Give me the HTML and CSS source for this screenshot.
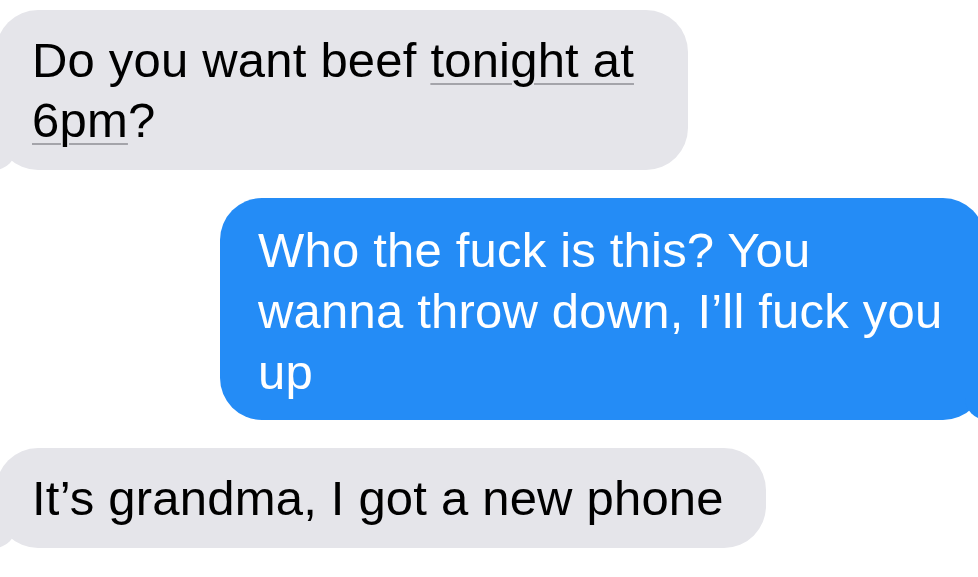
FILE: index.html
```html
<!DOCTYPE html>
<html lang="en">

<head>
    <meta charset="UTF-8">
    <meta name="viewport" content="width=device-width, initial-scale=1.0">
    <title>Messages</title>
    <link rel="stylesheet" href="styles.css">
</head>

<body>
    <div class="thread">
        <p class="bubble from-them first">Do you want beef <span class="detected">tonight at 6pm</span>?</p>

        <p class="bubble from-me">Who the fuck is this? You wanna throw down, I’ll fuck you up</p>

        <p class="bubble from-them last">It’s grandma, I got a new phone</p>
    </div>
</body>

</html>
```

FILE: styles.css
```css
html,
body {
    margin: 0;
    background: #fff;
    overflow: hidden;
}

.thread {
    display: flex;
    flex-direction: column;
    gap: 28px;
    padding-top: 10px;
    font-family: "Liberation Sans", Arial, sans-serif;
    font-size: 49px;
    letter-spacing: 0.2px;
    line-height: 60px;
}

.bubble {
    position: relative;
    margin: 0;
    padding: 20px 40px 20px 36px;
    border-radius: 42px;
    box-sizing: border-box;
}

.from-them {
    align-self: flex-start;
    margin-left: -4px;
    background: #e5e5ea;
    color: #000;
}

.from-them.first {
    width: 692px;
}

.from-them.last {
    white-space: nowrap;
    padding-right: 42px;
}

.from-me {
    align-self: flex-end;
    width: 765px;
    margin-right: -7px;
    padding: 22px 36px 17px 38px;
    line-height: 61px;
    background: #248cf6;
    color: #fff;
}

/* tails */
.from-them::before,
.from-me::before {
    content: "";
    position: absolute;
    bottom: 0;
    width: 30px;
    height: 28px;
}

.from-them::before {
    left: -10px;
    background: #e5e5ea;
    border-bottom-right-radius: 22px;
}

.from-them::after,
.from-me::after {
    content: "";
    position: absolute;
    bottom: 0;
    width: 30px;
    height: 28px;
    background: #fff;
}

.from-them::after {
    left: -30px;
    border-bottom-right-radius: 16px;
}

.from-me::before {
    right: -10px;
    background: #248cf6;
    border-bottom-left-radius: 22px;
}

.from-me::after {
    right: -30px;
    border-bottom-left-radius: 16px;
}

.detected {
    text-decoration: underline;
    text-decoration-color: #a4a4aa;
    text-decoration-thickness: 2px;
    text-underline-offset: 6px;
}
```
